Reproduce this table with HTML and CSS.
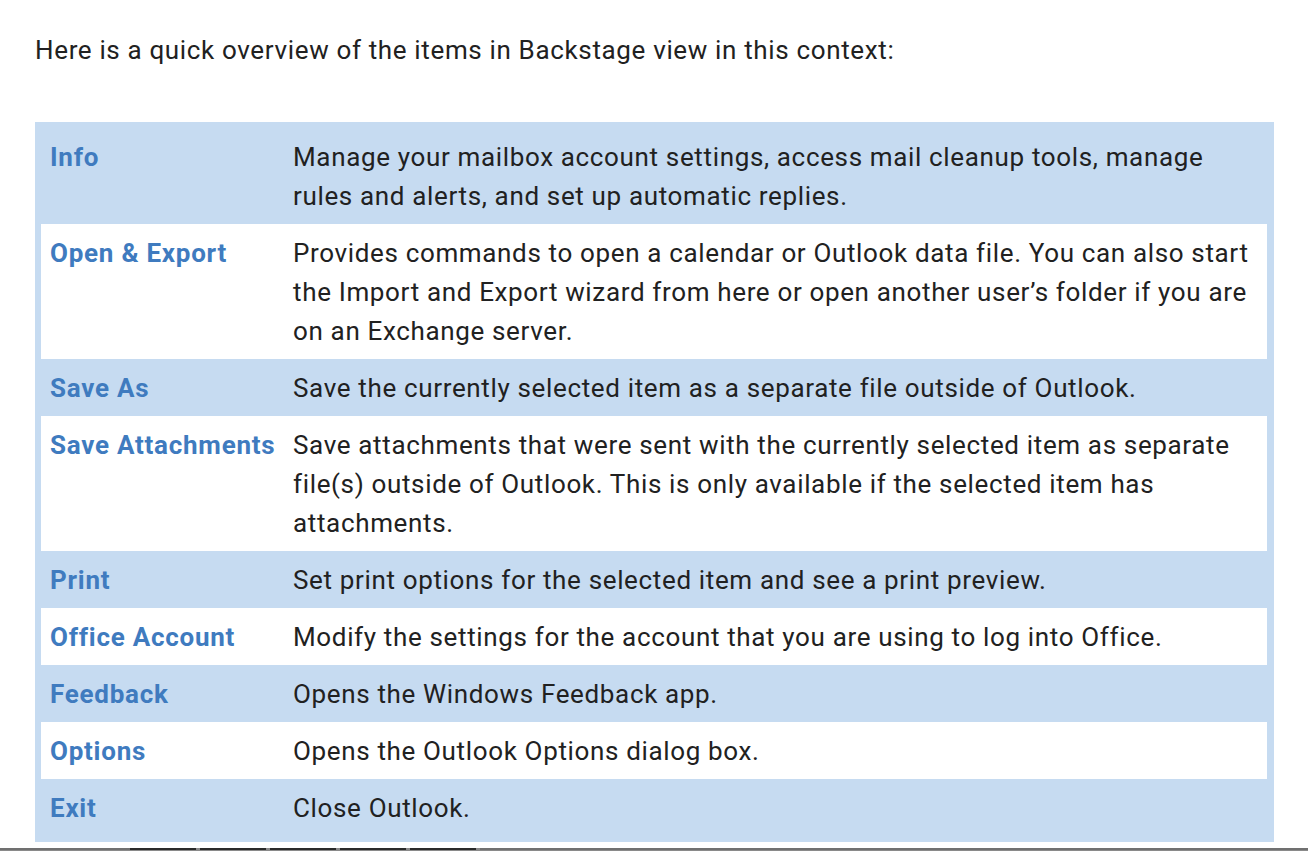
FILE: index.html
```html
<!DOCTYPE html>
<html lang="en">
<head>
<meta charset="utf-8">
<title>Backstage view overview</title>
<link rel="stylesheet" href="styles.css">
</head>
<body>
<div class="page">
  <p class="intro">Here is a quick overview of the items in Backstage view in this context:</p>
  <div class="table">
    <div class="row"><div class="label">Info</div><div class="desc">Manage your mailbox account settings, access mail cleanup tools, manage rules and alerts, and set up automatic replies.</div></div>
    <div class="row alt"><div class="label">Open &amp; Export</div><div class="desc">Provides commands to open a calendar or Outlook data file. You can also start the Import and Export wizard from here or open another user’s folder if you are on an Exchange server.</div></div>
    <div class="row"><div class="label">Save As</div><div class="desc">Save the currently selected item as a separate file outside of Outlook.</div></div>
    <div class="row alt"><div class="label">Save Attachments</div><div class="desc">Save attachments that were sent with the currently selected item as separate file(s) outside of Outlook. This is only available if the selected item has attachments.</div></div>
    <div class="row"><div class="label">Print</div><div class="desc">Set print options for the selected item and see a print preview.</div></div>
    <div class="row alt"><div class="label">Office Account</div><div class="desc">Modify the settings for the account that you are using to log into Office.</div></div>
    <div class="row"><div class="label">Feedback</div><div class="desc">Opens the Windows Feedback app.</div></div>
    <div class="row alt"><div class="label">Options</div><div class="desc">Opens the Outlook Options dialog box.</div></div>
    <div class="row"><div class="label">Exit</div><div class="desc">Close Outlook.</div></div>
  </div>
</div>
<div class="bottom-bar">
  <span class="seg seg-start"></span>
  <span class="seg dark"></span>
  <span class="seg dark"></span>
  <span class="seg dark"></span>
  <span class="seg dark"></span>
  <span class="seg dark"></span>
  <span class="seg rest"></span>
</div>
</body>
</html>
```

FILE: styles.css
```css
html, body {
  margin: 0;
  padding: 0;
  background: #ffffff;
}

body {
  font-family: Roboto, "Liberation Sans", Arial, sans-serif;
  font-size: 26px;
  line-height: 39px;
  letter-spacing: 0.65px;
  color: #212121;
  height: 851px;
  overflow: hidden;
  position: relative;
}

.page {
  padding: 31px 0 0 35px;
}

.intro {
  margin: 0 0 52px 0;
}

.table {
  width: 1239px;
  background: #c6dbf1;
  padding: 6px 0;
  box-sizing: border-box;
}

.row {
  display: grid;
  grid-template-columns: 252px 1fr;
  margin: 0 7px 0 6px;
}

.row.alt {
  background: #ffffff;
}

.label {
  padding: 10px 0 8px 9px;
  font-weight: 700;
  letter-spacing: 0.75px;
  color: #3f7bbf;
}

.desc {
  padding: 10px 9px 8px 0;
}

.bottom-bar {
  position: absolute;
  left: 0;
  top: 848px;
  width: 1308px;
  height: 3px;
  display: flex;
  background: #8a8a8a;
}

.seg {
  height: 2px;
  display: block;
}

.seg-start {
  width: 130px;
  background: #707070;
}

.seg.dark {
  width: 66px;
  margin-right: 4px;
  background: #2a2a2a;
}

.seg.rest {
  flex: 1;
  background: #707070;
}
```
